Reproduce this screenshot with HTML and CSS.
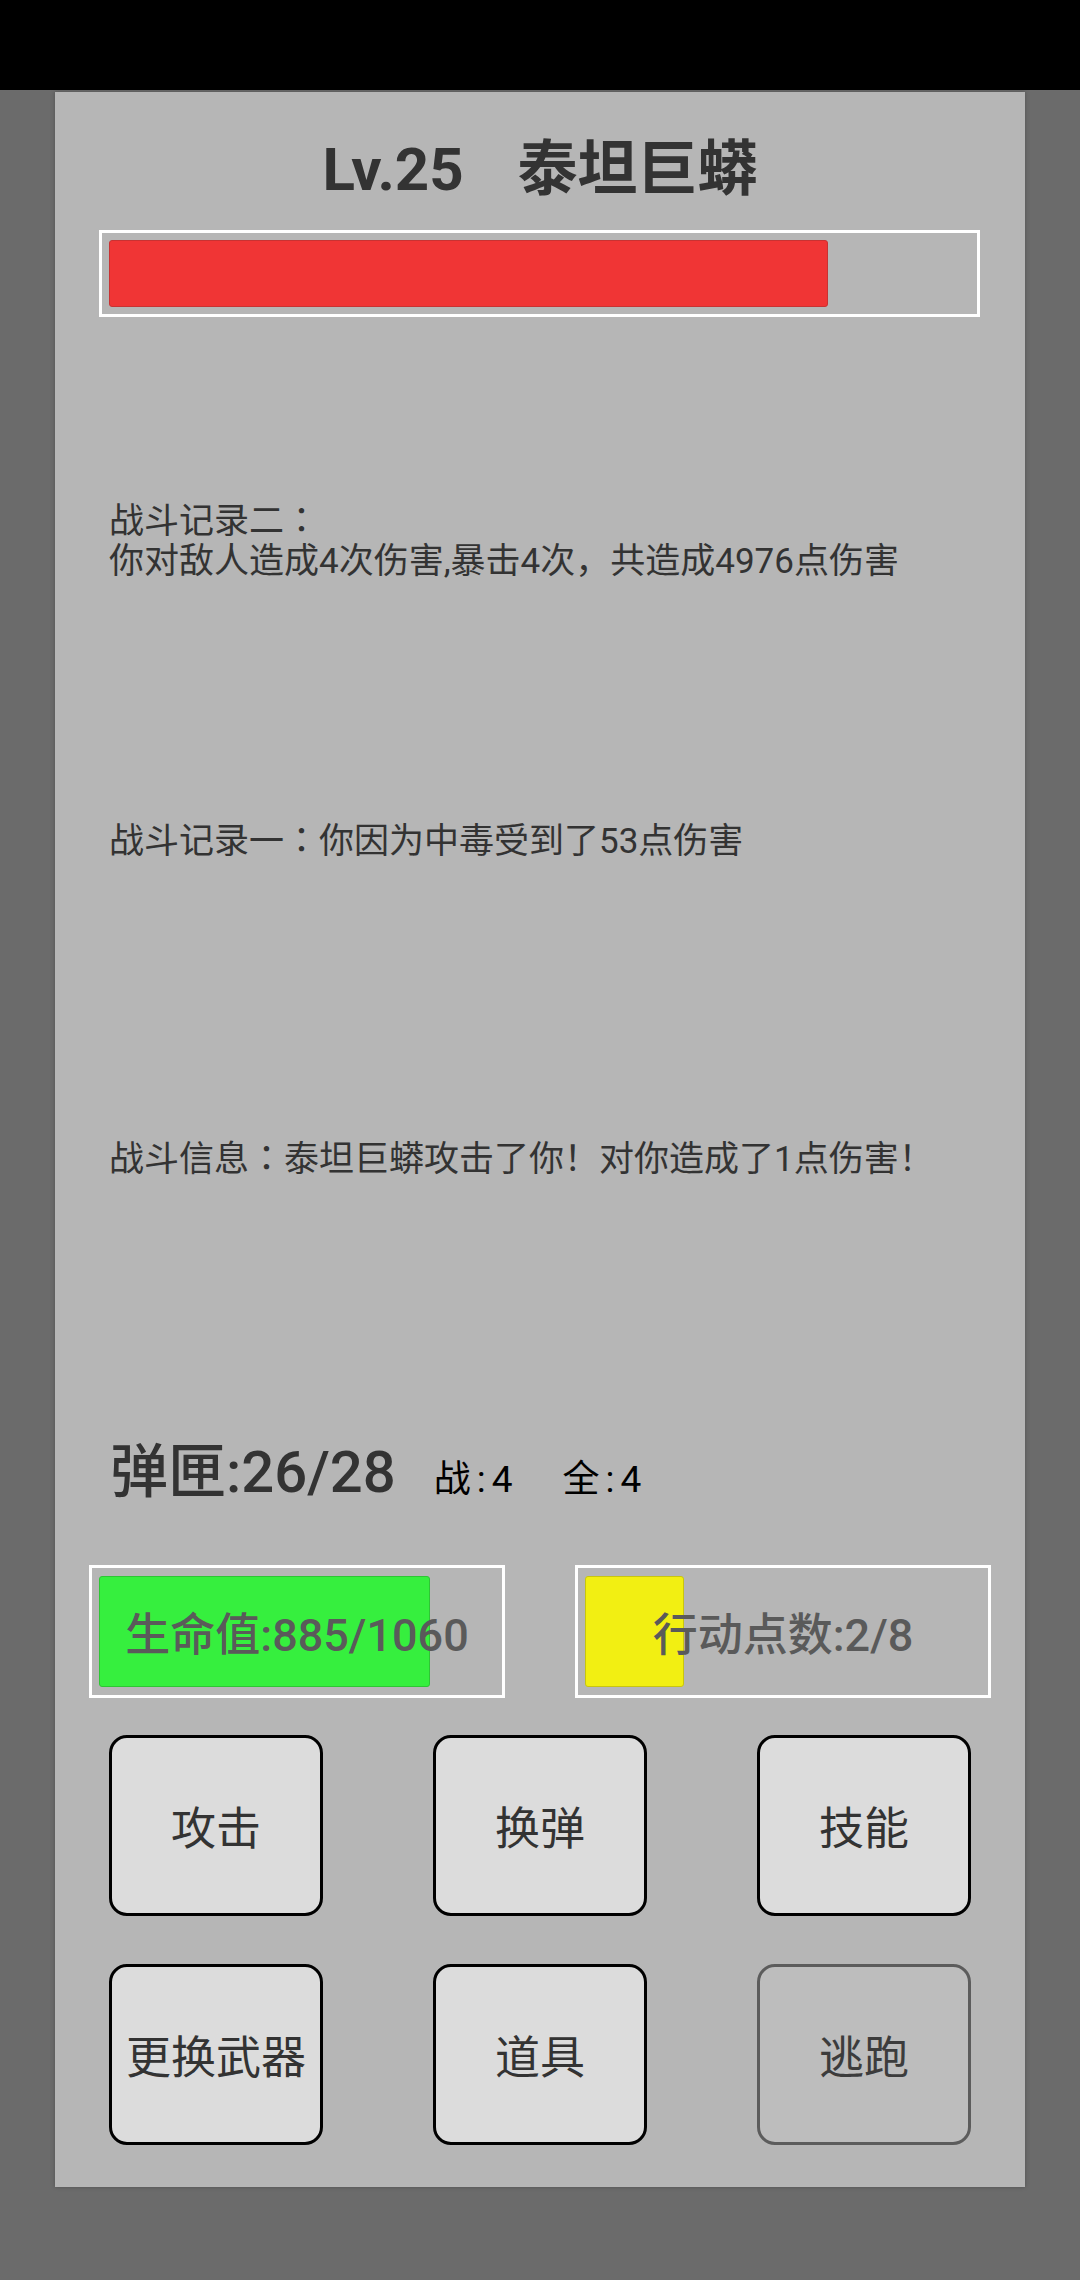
FILE: index.html
```html
<!DOCTYPE html>
<html lang="zh-CN">
<head>
<meta charset="utf-8">
<title>战斗</title>
<link rel="stylesheet" href="styles.css">
</head>
<body>
<div class="statusbar"></div>
<main class="panel">
  <h1 class="title">Lv.25   泰坦巨蟒</h1>
  <div class="boss-bar">
    <div class="boss-fill" style="width:83.5%"></div>
  </div>
  <p class="log log-two">战斗记录二<span lang="zh-TW">：</span><br>你对敌人造成4次伤害,暴击4次，共造成4976点伤害</p>
  <p class="log log-one">战斗记录一<span lang="zh-TW">：</span>你因为中毒受到了53点伤害</p>
  <p class="log log-info">战斗信息<span lang="zh-TW">：</span>泰坦巨蟒攻击了你！对你造成了1点伤害！</p>
  <div class="ammo-row">
    <span class="ammo">弹匣:26/28</span>
    <span class="count count-battle">战<span class="sep">:</span>4</span>
    <span class="count">全<span class="sep">:</span>4</span>
  </div>
  <div class="stats">
    <div class="stat">
      <div class="fill fill-hp" style="width:83.5%"></div>
      <span class="stat-label">生命值:885/1060</span>
    </div>
    <div class="stat">
      <div class="fill fill-ap" style="width:25%"></div>
      <span class="stat-label">行动点数:2/8</span>
    </div>
  </div>
  <div class="actions">
    <button class="btn">攻击</button>
    <button class="btn">换弹</button>
    <button class="btn">技能</button>
    <button class="btn">更换武器</button>
    <button class="btn">道具</button>
    <button class="btn btn-disabled">逃跑</button>
  </div>
</main>
</body>
</html>
```

FILE: styles.css
```css
* { box-sizing: border-box; }

html, body {
  margin: 0;
  padding: 0;
}

body {
  width: 1080px;
  height: 2280px;
  background: #6b6b6b;
  font-family: Roboto, "Noto Sans CJK SC", sans-serif;
  color: #333333;
  overflow: hidden;
}

.statusbar {
  height: 90px;
  background: #000000;
}

.panel {
  margin: 2px 55px 0 55px;
  height: 2095px;
  background: #b6b6b6;
  box-shadow: 0 0 4px rgba(0, 0, 0, 0.25);
  display: flex;
  flex-direction: column;
  padding-top: 43px;
}

.title {
  margin: 0;
  font-size: 60px;
  line-height: 70px;
  font-weight: 700;
  text-align: center;
  white-space: pre;
  word-spacing: 3px;
  color: #333333;
}

.boss-bar {
  margin: 25px 45px 0 44px;
  height: 87px;
  border: 3px solid #ffffff;
  padding: 7px;
}

.boss-fill {
  height: 100%;
  background: #f03535;
  border: 1px solid #c93232;
  border-radius: 3px;
}

.log {
  margin: 0;
  padding-left: 54px;
  font-size: 35px;
  line-height: 40px;
  color: #333333;
}

.log-two { margin-top: 185px; }
.log-one { margin-top: 240px; }
.log-info { margin-top: 278px; }

.ammo-row {
  margin-top: 257px;
  padding-left: 55px;
  display: flex;
  align-items: baseline;
  line-height: 70px;
}

.ammo {
  font-size: 58px;
  font-weight: 500;
  color: #333333;
}

.count {
  font-size: 37px;
  color: #000000;
}

.sep {
  margin: 0 6px;
}

.count-battle {
  margin-left: 38px;
  margin-right: 50px;
}

.stats {
  margin-top: 50px;
  padding: 0 34px;
  display: flex;
  justify-content: space-between;
}

.stat {
  position: relative;
  width: 416px;
  height: 133px;
  border: 3px solid #ffffff;
  padding: 8px 7px;
}

.fill {
  height: 100%;
  border-radius: 3px;
}

.fill-hp {
  background: #36ef3e;
  border: 1px solid #2dc634;
}

.fill-ap {
  background: #f2ef12;
  border: 1px solid #c8c50e;
}

.stat-label {
  position: absolute;
  inset: 0;
  display: flex;
  align-items: center;
  justify-content: center;
  font-size: 45px;
  font-weight: 500;
  color: #5a5a5a;
}

.actions {
  margin-top: 37px;
  padding: 0 54px;
  display: grid;
  grid-template-columns: repeat(3, 214px);
  grid-auto-rows: 181px;
  justify-content: space-between;
  row-gap: 48px;
}

.btn {
  margin: 0;
  padding: 0;
  border: 3px solid #000000;
  border-radius: 18px;
  background: #dcdcdc;
  font-family: Roboto, "Noto Sans CJK SC", sans-serif;
  font-size: 45px;
  color: #333333;
  display: flex;
  align-items: center;
  justify-content: center;
}

.btn-disabled {
  background: #bdbdbd;
  border-color: #5c5c5c;
  color: #3c3c3c;
}
```
